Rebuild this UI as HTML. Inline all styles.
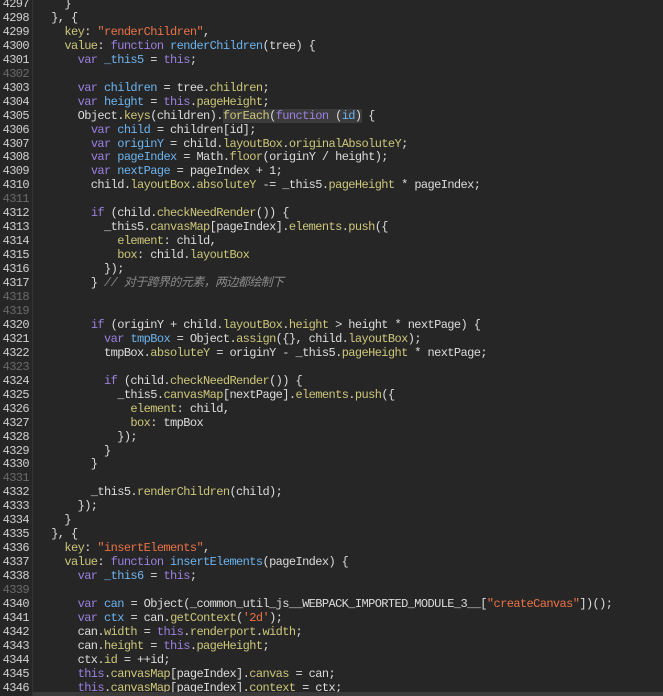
<!DOCTYPE html>
<html><head><meta charset="utf-8"><style>
html,body{margin:0;padding:0;background:#262626;width:663px;height:696px;overflow:hidden}
.g{position:absolute;left:0;top:0;width:32px;height:696px;background:#262626;border-right:1px solid #343434}
.ln{position:absolute;left:0;top:-2px;width:29px;text-align:right;font:12px/13.96px "Liberation Mono",monospace;letter-spacing:-0.6px;color:#d0d0d0;white-space:pre}
.ln .e{color:#6a6a6a}
.code{position:absolute;left:38px;top:-2px;font:12px/13.96px "Liberation Mono","Noto Sans CJK SC",monospace;letter-spacing:-0.6px;color:#dcdcdc;white-space:pre}
.k{color:#9b80e0}.v{color:#6cb4f0}.p{color:#cdc77a}.s{color:#ec7247}.c{color:#8a8a8a;font-style:italic}
.hl{background:#3b3b3b}
.sb{position:absolute;left:33px;top:692px;width:630px;height:4px;background:#3a3a3a}
</style></head><body>
<div class="g"></div>
<div class="ln">4297
4298
4299
4300
4301
<span class="e">4302</span>
4303
4304
4305
4306
4307
4308
4309
4310
<span class="e">4311</span>
4312
4313
4314
4315
4316
4317
<span class="e">4318</span>
<span class="e">4319</span>
4320
4321
4322
<span class="e">4323</span>
4324
4325
4326
4327
4328
4329
4330
<span class="e">4331</span>
4332
4333
4334
4335
4336
4337
4338
<span class="e">4339</span>
4340
4341
4342
4343
4344
4345
4346</div>
<div class="code">    }
  }, {
    <span class="p">key</span>: <span class="s">"renderChildren"</span>,
    <span class="p">value</span>: <span class="k">function</span> <span class="v">renderChildren</span>(tree) {
      <span class="k">var</span> <span class="v">_this5</span> = <span class="k">this</span>;

      <span class="k">var</span> <span class="v">children</span> = tree.<span class="p">children</span>;
      <span class="k">var</span> <span class="v">height</span> = <span class="k">this</span>.<span class="p">pageHeight</span>;
      Object.<span class="p">keys</span>(children).<span class="hl"><span class="p">forEach</span>(<span class="k">function</span> (<span class="v">id</span>)</span> {
        <span class="k">var</span> <span class="v">child</span> = children[id];
        <span class="k">var</span> <span class="v">originY</span> = child.<span class="p">layoutBox</span>.<span class="p">originalAbsoluteY</span>;
        <span class="k">var</span> <span class="v">pageIndex</span> = Math.<span class="p">floor</span>(originY / height);
        <span class="k">var</span> <span class="v">nextPage</span> = pageIndex + 1;
        child.<span class="p">layoutBox</span>.<span class="p">absoluteY</span> -= _this5.<span class="p">pageHeight</span> * pageIndex;

        <span class="k">if</span> (child.<span class="p">checkNeedRender</span>()) {
          _this5.<span class="p">canvasMap</span>[pageIndex].<span class="p">elements</span>.<span class="p">push</span>({
            <span class="p">element</span>: child,
            <span class="p">box</span>: child.<span class="p">layoutBox</span>
          });
        } <span class="c">// 对于跨界的元素，两边都绘制下</span>


        <span class="k">if</span> (originY + child.<span class="p">layoutBox</span>.<span class="p">height</span> &gt; height * nextPage) {
          <span class="k">var</span> <span class="v">tmpBox</span> = Object.<span class="p">assign</span>({}, child.<span class="p">layoutBox</span>);
          tmpBox.<span class="p">absoluteY</span> = originY - _this5.<span class="p">pageHeight</span> * nextPage;

          <span class="k">if</span> (child.<span class="p">checkNeedRender</span>()) {
            _this5.<span class="p">canvasMap</span>[nextPage].<span class="p">elements</span>.<span class="p">push</span>({
              <span class="p">element</span>: child,
              <span class="p">box</span>: tmpBox
            });
          }
        }

        _this5.<span class="p">renderChildren</span>(child);
      });
    }
  }, {
    <span class="p">key</span>: <span class="s">"insertElements"</span>,
    <span class="p">value</span>: <span class="k">function</span> <span class="v">insertElements</span>(pageIndex) {
      <span class="k">var</span> <span class="v">_this6</span> = <span class="k">this</span>;

      <span class="k">var</span> <span class="v">can</span> = Object(_common_util_js__WEBPACK_IMPORTED_MODULE_3__[<span class="s">"createCanvas"</span>])();
      <span class="k">var</span> <span class="v">ctx</span> = can.<span class="p">getContext</span>(<span class="s">'2d'</span>);
      can.<span class="p">width</span> = <span class="k">this</span>.<span class="p">renderport</span>.<span class="p">width</span>;
      can.<span class="p">height</span> = <span class="k">this</span>.<span class="p">pageHeight</span>;
      ctx.<span class="p">id</span> = ++id;
      <span class="k">this</span>.<span class="p">canvasMap</span>[pageIndex].<span class="p">canvas</span> = can;
      <span class="k">this</span>.<span class="p">canvasMap</span>[pageIndex].<span class="p">context</span> = ctx;</div>
<div class="sb"></div>
</body></html>
